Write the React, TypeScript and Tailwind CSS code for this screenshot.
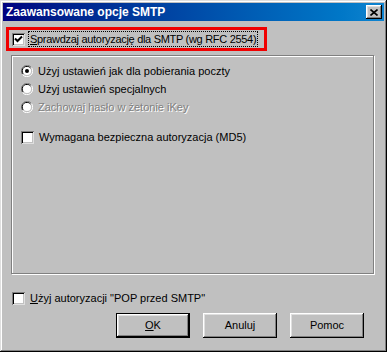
import React from 'react'

const raised =
  'bg-[#c0c0c0] shadow-[inset_-1px_-1px_#000,inset_1px_1px_#fff,inset_-2px_-2px_#808080,inset_2px_2px_#dfdfdf]'

function CheckBox({ checked = false }: { checked?: boolean }) {
  return (
    <div className="w-[13px] h-[13px] shrink-0 bg-white shadow-[inset_1px_1px_#808080,inset_-1px_-1px_#dfdfdf,inset_2px_2px_#000,inset_-2px_-2px_#c0c0c0] flex items-center justify-center">
      {checked && (
        <svg width="9" height="9" viewBox="0 0 9 9">
          <path d="M1 3.5 L3.5 6 L8 1.5" stroke="#000" strokeWidth="2" fill="none" />
        </svg>
      )}
    </div>
  )
}

function Radio({ checked = false }: { checked?: boolean }) {
  return (
    <svg width="12" height="12" viewBox="0 0 12 12" className="shrink-0">
      <path d="M10.5 2.5 A5.5 5.5 0 0 0 1.5 9.5" stroke="#808080" fill="none" />
      <path d="M1.5 9.5 A5.5 5.5 0 0 0 10.5 2.5" stroke="#fff" fill="none" />
      <path d="M9.5 3.2 A4.5 4.5 0 0 0 2.2 9" stroke="#000" fill="none" />
      <circle cx="6" cy="6" r="4" fill="#fff" />
      {checked && <circle cx="6" cy="6" r="2" fill="#000" />}
    </svg>
  )
}

export default function App() {
  return (
    <div
      className="w-[387px] h-[352px] bg-[#c0c0c0] p-[3px] flex flex-col text-[11px] text-black whitespace-nowrap shadow-[inset_-1px_-1px_#000,inset_1px_1px_#dfdfdf,inset_-2px_-2px_#808080,inset_2px_2px_#fff]"
      style={{ fontFamily: '"Liberation Sans", Arial, sans-serif' }}
    >
      {/* title bar */}
      <div className="h-[18px] flex items-center justify-between bg-gradient-to-r from-[#000080] to-[#1084d0] pl-[3px] pr-[2px]">
        <span className="text-white font-bold text-[12px] leading-none">Zaawansowane opcje SMTP</span>
        <div className={`w-[16px] h-[14px] flex items-center justify-center ${raised}`}>
          <svg width="8" height="7" viewBox="0 0 8 7">
            <path d="M0.5 0.5 L7.5 6.5 M7.5 0.5 L0.5 6.5" stroke="#000" strokeWidth="1.6" />
          </svg>
        </div>
      </div>

      {/* highlighted option */}
      <div className="mt-[6px] ml-[3px] w-[261px] h-[24px] border-[3px] border-[#f00000] flex items-center pl-[3px]">
        <CheckBox checked />
        <span className="ml-[4px] px-[1px] tracking-[-0.3px] outline outline-1 outline-dotted outline-black leading-[14px]">
          <u>S</u>prawdzaj autoryzację dla SMTP (wg RFC 2554)
        </span>
      </div>

      {/* options group */}
      <div className="mt-[4px] ml-[8px] w-[363px] h-[219px] border border-[#808080] shadow-[inset_1px_1px_#fff,1px_1px_#fff] pt-[6px] pl-[9px] flex flex-col">
        <div className="h-[18px] flex items-center gap-[5px]">
          <Radio checked />
          <span>Użyj ustawień jak dla pobierania poczty</span>
        </div>
        <div className="h-[18px] flex items-center gap-[5px]">
          <Radio />
          <span>Użyj ustawień specjalnych</span>
        </div>
        <div className="h-[18px] flex items-center gap-[5px]">
          <Radio />
          <span className="text-[#808080] [text-shadow:1px_1px_#fff]">Zachowaj hasło w żetonie iKey</span>
        </div>
        <div className="mt-[12px] h-[18px] flex items-center gap-[5px]">
          <CheckBox />
          <span>Wymagana bezpieczna autoryzacja (MD5)</span>
        </div>
      </div>

      <div className="mt-[15px] ml-[9px] h-[18px] flex items-center gap-[5px]">
        <CheckBox />
        <span>
          <u>U</u>żyj autoryzacji "POP przed SMTP"
        </span>
      </div>

      {/* buttons */}
      <div className="mt-[6px] pl-[113px] flex gap-[13px]">
        <button className="w-[74px] h-[25px] border border-black p-0">
          <div className={`w-full h-full flex items-center justify-center ${raised}`}>
            <span>
              <u>O</u>K
            </span>
          </div>
        </button>
        <button className={`w-[74px] h-[25px] flex items-center justify-center ${raised}`}>Anuluj</button>
        <button className={`w-[74px] h-[25px] flex items-center justify-center ${raised}`}>Pomoc</button>
      </div>
    </div>
  )
}
